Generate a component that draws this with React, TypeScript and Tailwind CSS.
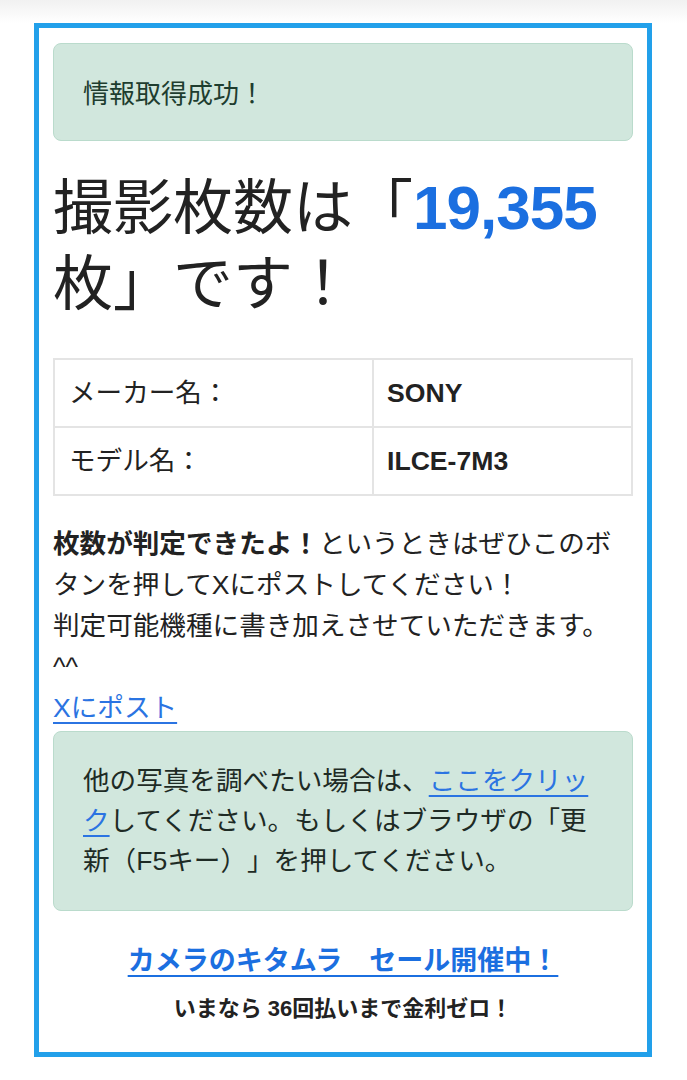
const App = () => {
  return (
    <div className="min-h-[1080px] bg-white font-['Liberation_Sans','Noto_Sans_CJK_JP',sans-serif] text-[#222] [text-spacing-trim:space-all]">
      {/* faint shadow at the top edge */}
      <div className="h-[23px] bg-linear-to-b from-[#f1f1f1] to-white" />

      <div className="mx-[34px] w-[618px] border-[5px] border-[#22a0ea] bg-white px-[14px] pt-[15px] pb-[26px]">
        {/* success alert */}
        <div className="rounded-[8px] border border-[#badbcc] bg-[#d1e7dd] px-[29px] pt-[31px] pb-[27px] text-[26px] leading-[38px] text-[#1e3d2f]">
          情報取得成功！
        </div>

        {/* result heading */}
        <h1 className="mt-[29px] text-[60px] leading-[76px] font-normal">
          撮影枚数は「
          <span className="text-[62px] font-bold tracking-[-1px] text-[#1b6fe0]">19,355</span>
          枚」です！
        </h1>

        {/* camera info */}
        <table className="mt-[35px] w-full border-collapse text-[26.6px] leading-[40px]">
          <tbody>
            <tr>
              <td className="w-[319px] border-2 border-[#e4e4e4] px-[14px] py-[13px]">メーカー名：</td>
              <td className="border-2 border-[#e4e4e4] px-[13px] py-[13px] font-bold">SONY</td>
            </tr>
            <tr>
              <td className="w-[319px] border-2 border-[#e4e4e4] px-[14px] py-[13px]">モデル名：</td>
              <td className="border-2 border-[#e4e4e4] px-[13px] py-[13px] font-bold">ILCE-7M3</td>
            </tr>
          </tbody>
        </table>

        <p className="mt-[28px] text-[26.6px] leading-[41px]">
          <strong className="font-bold">枚数が判定できたよ！</strong>
          というときはぜひこのボタンを押してXにポストしてください！
          <br />
          判定可能機種に書き加えさせていただきます。^^
          <br />
          <a href="#" className="text-[#2b74e2] underline underline-offset-[5px]">
            Xにポスト
          </a>
        </p>

        {/* retry alert */}
        <div className="mt-[2px] rounded-[8px] border border-[#badbcc] bg-[#d1e7dd] px-[29px] py-[29px] text-[26.6px] leading-[40px] text-[#1e2b25]">
          他の写真を調べたい場合は、
          <a href="#" className="text-[#2b74e2] underline underline-offset-[5px]">
            ここをクリック
          </a>
          してください。もしくはブラウザの「更新（F5キー）」を押してください。
        </div>

        {/* sale banner */}
        <div className="mt-[30px] text-center">
          <a href="#" className="text-[27px] leading-[40px] font-bold text-[#1b6fe0] underline underline-offset-[5px]">
            カメラのキタムラ　セール開催中！
          </a>
          <p className="mt-[11px] text-[22px] leading-[34px] font-bold text-[#222]">
            いまなら 36回払いまで金利ゼロ！
          </p>
        </div>
      </div>
    </div>
  );
};

export default App;
